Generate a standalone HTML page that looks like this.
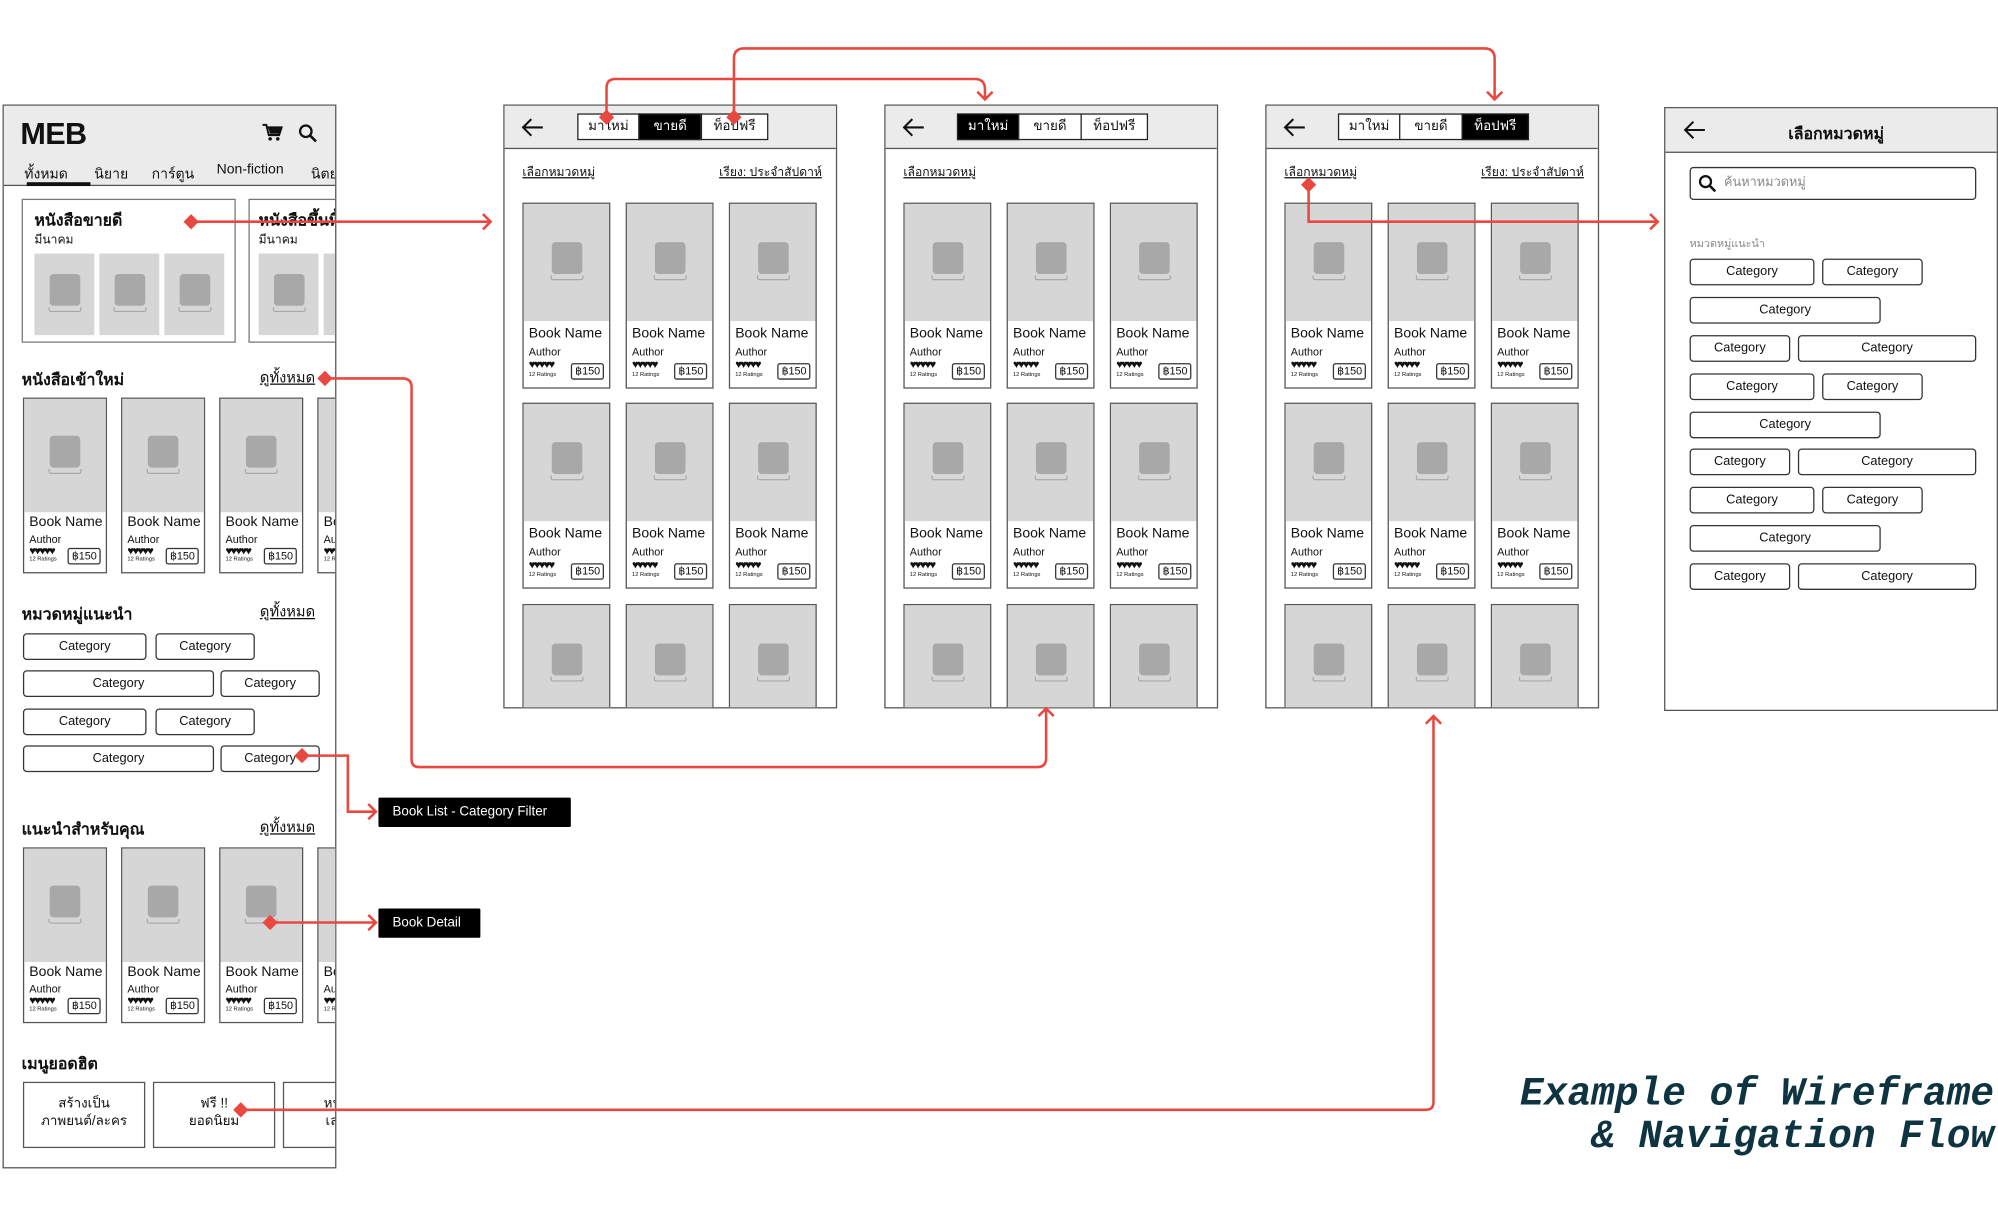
<!DOCTYPE html>
<html><head><meta charset="utf-8"><style>
*{margin:0;padding:0;box-sizing:border-box}
html,body{width:1998px;height:1221px;overflow:hidden;background:#fff}
body{font-family:"Liberation Sans","Noto Sans CJK SC",sans-serif;color:#111}
#w{position:absolute;left:0;top:0;width:1568px;height:958px;transform:scale(1.2742);transform-origin:0 0}
.p{position:absolute;border:1px solid #555;background:#fff;overflow:hidden}
.hd{position:absolute;left:0;top:0;right:0;background:#ebebeb;border-bottom:1px solid #555}
.a{position:absolute;white-space:nowrap}
.bk{position:absolute;border:1px solid #555;background:#fff;overflow:hidden}
.bk .im{position:absolute;left:0;top:0;right:0;background:#d6d6d6}
.bk .im i,.ph i{position:absolute;left:50%;top:50%;width:24px;height:25px;margin:-16px 0 0 -12px;background:#a8a8a8;border-radius:3px}
.bk .im i:after,.ph i:after{content:"";position:absolute;left:-1px;right:-1px;bottom:-5px;height:3px;border:1px solid #a8a8a8;border-top:none;border-radius:0 0 2px 2px}
.bk b{position:absolute;left:4px;font-weight:normal;font-size:11px;white-space:nowrap}
.bk em{position:absolute;left:4px;font-style:normal;font-size:8.5px}
.bk u{position:absolute;left:4px;text-decoration:none;font-size:9px;letter-spacing:-1.5px;line-height:8px}
.bk small{position:absolute;left:4px;font-size:4.5px}
.bk span{position:absolute;right:4px;border:1px solid #333;border-radius:2px;font-size:8.5px;padding:0 2px;line-height:11px}
.s{width:69px;height:146px}.s .im{height:92px}.s b{top:96px}.s em{top:111px}.s u{top:122px}.s small{top:131px}.s span{top:125px}
.l{width:66px;height:138px}.l .im{height:89px}.l b{top:91px}.l em{top:105px}.l u{top:115px}.l small{top:123px}.l span{top:117px}
.c{position:absolute;height:21px;border:1px solid #333;border-radius:3px;font-size:10px;text-align:center;line-height:19px;background:#fff}
.tb{position:absolute;top:6px;height:21px;border:1px solid #222;font-size:10.5px;text-align:center;line-height:19px;background:#fff}
.tb.on{background:#000;color:#fff}
.lk{position:absolute;top:45px;font-size:9.5px;text-decoration:underline}
.ph{position:absolute;background:#d6d6d6}
.h{position:absolute;font-weight:bold;font-size:12.5px;white-space:nowrap}
.ul{text-decoration:underline;font-weight:normal}
.lab{position:absolute;background:#000;color:#fff;font-size:10.5px;line-height:23px;padding-left:11px;border-radius:1px}
</style></head><body><div id="w">

<!-- LEFT PANEL -->
<div class="p" style="left:2px;top:82px;width:262px;height:835px">
 <div class="hd" style="height:63px"></div>
 <div class="a" style="left:13px;top:9px;font-size:24px;font-weight:bold;letter-spacing:-0.5px">MEB</div>
 <svg class="a" style="left:203px;top:14px" width="16" height="14" viewBox="0 0 16 14"><path d="M0 1h3l2 8h8l2-6H4" fill="none" stroke="#111" stroke-width="1.6"/><path d="M4.5 3h10l-1.8 5H6z" fill="#111"/><circle cx="6" cy="12" r="1.4" fill="#111"/><circle cx="12" cy="12" r="1.4" fill="#111"/></svg>
 <svg class="a" style="left:231px;top:14px" width="15" height="15" viewBox="0 0 15 15"><circle cx="6" cy="6" r="4.5" fill="none" stroke="#111" stroke-width="1.8"/><path d="M9.5 9.5l4.5 4.5" stroke="#111" stroke-width="2"/></svg>
 <div class="a" style="left:16px;top:44px;font-size:11px">ทั้งหมด</div>
 <div class="a" style="left:71px;top:44px;font-size:11px">นิยาย</div>
 <div class="a" style="left:116px;top:44px;font-size:11px">การ์ตูน</div>
 <div class="a" style="left:167px;top:44px;font-size:11px">Non-fiction</div>
 <div class="a" style="left:241px;top:44px;font-size:11px">นิตยสาร</div>
 <div class="a" style="left:18px;top:60px;width:50px;height:3px;background:#111"></div>

 <div class="a" style="left:14px;top:73px;width:168px;height:113px;border:1px solid #777"></div>
 <div class="h" style="left:24px;top:80px">หนังสือขายดี</div>
 <div class="a" style="left:24px;top:98px;font-size:9.5px">มีนาคม</div>
 <div class="ph" style="left:24px;top:116px;width:47px;height:64px"><i></i></div>
 <div class="ph" style="left:75px;top:116px;width:47px;height:64px"><i></i></div>
 <div class="ph" style="left:126px;top:116px;width:47px;height:64px"><i></i></div>
 <div class="a" style="left:192px;top:73px;width:100px;height:113px;border:1px solid #777"></div>
 <div class="h" style="left:200px;top:80px">หนังสือขึ้นหิ้ง</div>
 <div class="a" style="left:200px;top:98px;font-size:9.5px">มีนาคม</div>
 <div class="ph" style="left:200px;top:116px;width:47px;height:64px"><i></i></div>
 <div class="ph" style="left:251px;top:116px;width:47px;height:64px"></div>

 <div class="h" style="left:14px;top:205px">หนังสือเข้าใหม่</div>
 <div class="h ul" style="left:201px;top:205px;font-size:11.5px">ดูทั้งหมด</div>
 <div class="bk l" style="left:15px;top:229px"><div class="im"><i></i></div><b>Book Name</b><em>Author</em><u>♥♥♥♥♥</u><small>12 Ratings</small><span>฿150</span></div>
 <div class="bk l" style="left:92px;top:229px"><div class="im"><i></i></div><b>Book Name</b><em>Author</em><u>♥♥♥♥♥</u><small>12 Ratings</small><span>฿150</span></div>
 <div class="bk l" style="left:169px;top:229px"><div class="im"><i></i></div><b>Book Name</b><em>Author</em><u>♥♥♥♥♥</u><small>12 Ratings</small><span>฿150</span></div>
 <div class="bk l" style="left:246px;top:229px"><div class="im"><i></i></div><b>Book Name</b><em>Author</em><u>♥♥♥♥♥</u><small>12 Ratings</small><span>฿150</span></div>

 <div class="h" style="left:14px;top:389px">หมวดหมู่แนะนำ</div>
 <div class="h ul" style="left:201px;top:389px;font-size:11.5px">ดูทั้งหมด</div>
 <div class="c" style="left:15px;top:414px;width:97px">Category</div>
 <div class="c" style="left:119px;top:414px;width:78px">Category</div>
 <div class="c" style="left:15px;top:443px;width:150px">Category</div>
 <div class="c" style="left:170px;top:443px;width:78px">Category</div>
 <div class="c" style="left:15px;top:473px;width:97px">Category</div>
 <div class="c" style="left:119px;top:473px;width:78px">Category</div>
 <div class="c" style="left:15px;top:502px;width:150px">Category</div>
 <div class="c" style="left:170px;top:502px;width:78px">Category</div>

 <div class="h" style="left:14px;top:558px">แนะนำสำหรับคุณ</div>
 <div class="h ul" style="left:201px;top:558px;font-size:11.5px">ดูทั้งหมด</div>
 <div class="bk l" style="left:15px;top:582px"><div class="im"><i></i></div><b>Book Name</b><em>Author</em><u>♥♥♥♥♥</u><small>12 Ratings</small><span>฿150</span></div>
 <div class="bk l" style="left:92px;top:582px"><div class="im"><i></i></div><b>Book Name</b><em>Author</em><u>♥♥♥♥♥</u><small>12 Ratings</small><span>฿150</span></div>
 <div class="bk l" style="left:169px;top:582px"><div class="im"><i></i></div><b>Book Name</b><em>Author</em><u>♥♥♥♥♥</u><small>12 Ratings</small><span>฿150</span></div>
 <div class="bk l" style="left:246px;top:582px"><div class="im"><i></i></div><b>Book Name</b><em>Author</em><u>♥♥♥♥♥</u><small>12 Ratings</small><span>฿150</span></div>

 <div class="h" style="left:14px;top:742px">เมนูยอดฮิต</div>
 <div class="a" style="left:15px;top:766px;width:96px;height:52px;border:1px solid #555;font-size:10.5px;text-align:center;padding-top:9px;line-height:14px">สร้างเป็น<br>ภาพยนต์/ละคร</div>
 <div class="a" style="left:117px;top:766px;width:96px;height:52px;border:1px solid #555;font-size:10.5px;text-align:center;padding-top:9px;line-height:14px">ฟรี !!<br>ยอดนิยม</div>
 <div class="a" style="left:219px;top:766px;width:96px;height:52px;border:1px solid #555;font-size:10.5px;text-align:center;padding-top:9px;line-height:14px">หนังสือ<br>เล่มละ</div>
</div>

<div class="lab" style="left:297px;top:626px;width:151px">Book List - Category Filter</div>
<div class="lab" style="left:297px;top:713px;width:80px">Book Detail</div>

<!-- SCREEN 2 -->
<div class="p" style="left:395px;top:82px;width:262px;height:474px">
 <div class="hd" style="height:34px"></div>
 <svg class="a" style="left:13px;top:9px" width="18" height="16" viewBox="0 0 18 16"><path d="M17 8H2M8 1.5L1.5 8 8 14.5" fill="none" stroke="#111" stroke-width="1.6"/></svg>
 <div class="tb" style="left:57px;width:49px">มาใหม่</div><div class="tb on" style="left:105px;width:50px">ขายดี</div><div class="tb" style="left:154px;width:53px">ท็อปฟรี</div>
 <div class="lk" style="left:14px">เลือกหมวดหมู่</div><div class="lk" style="right:11px">เรียง: ประจำสัปดาห์</div>
 <div class="bk s" style="left:14px;top:76px"><div class="im"><i></i></div><b>Book Name</b><em>Author</em><u>♥♥♥♥♥</u><small>12 Ratings</small><span>฿150</span></div>
 <div class="bk s" style="left:95px;top:76px"><div class="im"><i></i></div><b>Book Name</b><em>Author</em><u>♥♥♥♥♥</u><small>12 Ratings</small><span>฿150</span></div>
 <div class="bk s" style="left:176px;top:76px"><div class="im"><i></i></div><b>Book Name</b><em>Author</em><u>♥♥♥♥♥</u><small>12 Ratings</small><span>฿150</span></div>
 <div class="bk s" style="left:14px;top:233px"><div class="im"><i></i></div><b>Book Name</b><em>Author</em><u>♥♥♥♥♥</u><small>12 Ratings</small><span>฿150</span></div>
 <div class="bk s" style="left:95px;top:233px"><div class="im"><i></i></div><b>Book Name</b><em>Author</em><u>♥♥♥♥♥</u><small>12 Ratings</small><span>฿150</span></div>
 <div class="bk s" style="left:176px;top:233px"><div class="im"><i></i></div><b>Book Name</b><em>Author</em><u>♥♥♥♥♥</u><small>12 Ratings</small><span>฿150</span></div>
 <div class="bk s" style="left:14px;top:391px"><div class="im"><i></i></div></div>
 <div class="bk s" style="left:95px;top:391px"><div class="im"><i></i></div></div>
 <div class="bk s" style="left:176px;top:391px"><div class="im"><i></i></div></div>
</div>

<!-- SCREEN 3 -->
<div class="p" style="left:694px;top:82px;width:262px;height:474px">
 <div class="hd" style="height:34px"></div>
 <svg class="a" style="left:13px;top:9px" width="18" height="16" viewBox="0 0 18 16"><path d="M17 8H2M8 1.5L1.5 8 8 14.5" fill="none" stroke="#111" stroke-width="1.6"/></svg>
 <div class="tb on" style="left:56px;width:49px">มาใหม่</div><div class="tb" style="left:104px;width:50px">ขายดี</div><div class="tb" style="left:153px;width:53px">ท็อปฟรี</div>
 <div class="lk" style="left:14px">เลือกหมวดหมู่</div>
 <div class="bk s" style="left:14px;top:76px"><div class="im"><i></i></div><b>Book Name</b><em>Author</em><u>♥♥♥♥♥</u><small>12 Ratings</small><span>฿150</span></div>
 <div class="bk s" style="left:95px;top:76px"><div class="im"><i></i></div><b>Book Name</b><em>Author</em><u>♥♥♥♥♥</u><small>12 Ratings</small><span>฿150</span></div>
 <div class="bk s" style="left:176px;top:76px"><div class="im"><i></i></div><b>Book Name</b><em>Author</em><u>♥♥♥♥♥</u><small>12 Ratings</small><span>฿150</span></div>
 <div class="bk s" style="left:14px;top:233px"><div class="im"><i></i></div><b>Book Name</b><em>Author</em><u>♥♥♥♥♥</u><small>12 Ratings</small><span>฿150</span></div>
 <div class="bk s" style="left:95px;top:233px"><div class="im"><i></i></div><b>Book Name</b><em>Author</em><u>♥♥♥♥♥</u><small>12 Ratings</small><span>฿150</span></div>
 <div class="bk s" style="left:176px;top:233px"><div class="im"><i></i></div><b>Book Name</b><em>Author</em><u>♥♥♥♥♥</u><small>12 Ratings</small><span>฿150</span></div>
 <div class="bk s" style="left:14px;top:391px"><div class="im"><i></i></div></div>
 <div class="bk s" style="left:95px;top:391px"><div class="im"><i></i></div></div>
 <div class="bk s" style="left:176px;top:391px"><div class="im"><i></i></div></div>
</div>

<!-- SCREEN 4 -->
<div class="p" style="left:993px;top:82px;width:262px;height:474px">
 <div class="hd" style="height:34px"></div>
 <svg class="a" style="left:13px;top:9px" width="18" height="16" viewBox="0 0 18 16"><path d="M17 8H2M8 1.5L1.5 8 8 14.5" fill="none" stroke="#111" stroke-width="1.6"/></svg>
 <div class="tb" style="left:56px;width:49px">มาใหม่</div><div class="tb" style="left:104px;width:50px">ขายดี</div><div class="tb on" style="left:153px;width:53px">ท็อปฟรี</div>
 <div class="lk" style="left:14px">เลือกหมวดหมู่</div><div class="lk" style="right:11px">เรียง: ประจำสัปดาห์</div>
 <div class="bk s" style="left:14px;top:76px"><div class="im"><i></i></div><b>Book Name</b><em>Author</em><u>♥♥♥♥♥</u><small>12 Ratings</small><span>฿150</span></div>
 <div class="bk s" style="left:95px;top:76px"><div class="im"><i></i></div><b>Book Name</b><em>Author</em><u>♥♥♥♥♥</u><small>12 Ratings</small><span>฿150</span></div>
 <div class="bk s" style="left:176px;top:76px"><div class="im"><i></i></div><b>Book Name</b><em>Author</em><u>♥♥♥♥♥</u><small>12 Ratings</small><span>฿150</span></div>
 <div class="bk s" style="left:14px;top:233px"><div class="im"><i></i></div><b>Book Name</b><em>Author</em><u>♥♥♥♥♥</u><small>12 Ratings</small><span>฿150</span></div>
 <div class="bk s" style="left:95px;top:233px"><div class="im"><i></i></div><b>Book Name</b><em>Author</em><u>♥♥♥♥♥</u><small>12 Ratings</small><span>฿150</span></div>
 <div class="bk s" style="left:176px;top:233px"><div class="im"><i></i></div><b>Book Name</b><em>Author</em><u>♥♥♥♥♥</u><small>12 Ratings</small><span>฿150</span></div>
 <div class="bk s" style="left:14px;top:391px"><div class="im"><i></i></div></div>
 <div class="bk s" style="left:95px;top:391px"><div class="im"><i></i></div></div>
 <div class="bk s" style="left:176px;top:391px"><div class="im"><i></i></div></div>
</div>

<!-- SCREEN 5 -->
<div class="p" style="left:1306px;top:84px;width:262px;height:474px">
 <div class="hd" style="height:35px"></div>
 <svg class="a" style="left:14px;top:9px" width="18" height="16" viewBox="0 0 18 16"><path d="M17 8H2M8 1.5L1.5 8 8 14.5" fill="none" stroke="#111" stroke-width="1.6"/></svg>
 <div class="h" style="left:0;right:0;text-align:center;top:10px;padding-left:8px">เลือกหมวดหมู่</div>
 <div class="a" style="left:19px;top:46px;width:225px;height:26px;border:1px solid #333;border-radius:3px"></div>
 <svg class="a" style="left:26px;top:52px" width="14" height="14" viewBox="0 0 14 14"><circle cx="5.5" cy="5.5" r="4.3" fill="none" stroke="#111" stroke-width="1.8"/><path d="M8.7 8.7l4.5 4.5" stroke="#111" stroke-width="2"/></svg>
 <div class="a" style="left:46px;top:51px;font-size:10px;color:#888">ค้นหาหมวดหมู่</div>
 <div class="a" style="left:19px;top:99px;font-size:8.5px;color:#888">หมวดหมู่แนะนำ</div>
 <div class="c" style="left:19px;top:118px;width:98px">Category</div><div class="c" style="left:123px;top:118px;width:79px">Category</div>
 <div class="c" style="left:19px;top:148px;width:150px">Category</div>
 <div class="c" style="left:19px;top:178px;width:79px">Category</div><div class="c" style="left:104px;top:178px;width:140px">Category</div>
 <div class="c" style="left:19px;top:208px;width:98px">Category</div><div class="c" style="left:123px;top:208px;width:79px">Category</div>
 <div class="c" style="left:19px;top:238px;width:150px">Category</div>
 <div class="c" style="left:19px;top:267px;width:79px">Category</div><div class="c" style="left:104px;top:267px;width:140px">Category</div>
 <div class="c" style="left:19px;top:297px;width:98px">Category</div><div class="c" style="left:123px;top:297px;width:79px">Category</div>
 <div class="c" style="left:19px;top:327px;width:150px">Category</div>
 <div class="c" style="left:19px;top:357px;width:79px">Category</div><div class="c" style="left:104px;top:357px;width:140px">Category</div>
</div>

<div class="a" style="right:3px;top:843px;font-family:'Liberation Mono',monospace;font-weight:bold;font-style:italic;font-size:31px;line-height:33px;color:#0d3440;text-align:right">Example of Wireframe<br>&amp; Navigation Flow</div>

<svg class="a" style="left:0;top:0" width="1568" height="958" viewBox="0 0 1568 958">
<g fill="none" stroke="#e8483f" stroke-width="2">
 <path d="M150 174H385M379 168l6 6-6 6"/>
 <path d="M255 297H316q7 0 7 7V596q0 6 6 6H814q7 0 7-7V556M815 562l6-6 6 6"/>
 <path d="M476 92V69q0-7 7-7H765q8 0 8 8V78M767 72l6 6 6-6"/>
 <path d="M576 92V46q0-8 8-8H1165q8 0 8 8V78M1167 72l6 6 6-6"/>
 <path d="M237 593H273V637H295M289 631l6 6-6 6"/>
 <path d="M212 724H295M289 718l6 6-6 6"/>
 <path d="M189 871H1119q6 0 6-6V562M1119 568l6-6 6 6"/>
 <path d="M1027 145V174H1301M1295 168l6 6-6 6"/>
</g>
<g fill="#e8483f">
 <path d="M150 168l6 6-6 6-6-6z"/><path d="M255 291l6 6-6 6-6-6z"/><path d="M476 86l6 6-6 6-6-6z"/><path d="M576 86l6 6-6 6-6-6z"/>
 <path d="M237 587l6 6-6 6-6-6z"/><path d="M212 718l6 6-6 6-6-6z"/><path d="M189 865l6 6-6 6-6-6z"/><path d="M1027 139l6 6-6 6-6-6z"/>
</g>
</svg>
</div></body></html>
